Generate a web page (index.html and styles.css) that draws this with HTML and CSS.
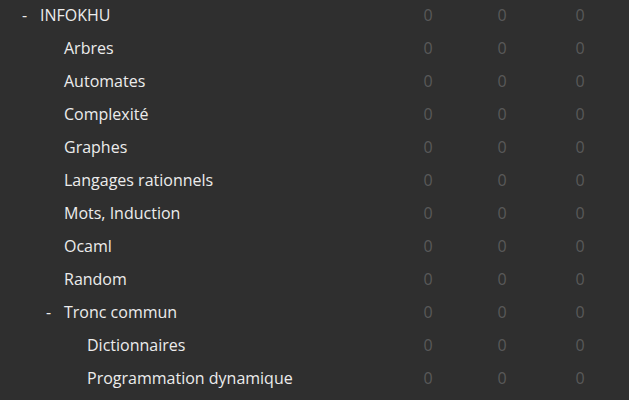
FILE: index.html
```html
<!DOCTYPE html>
<html>
<head>
<meta charset="utf-8">
<link rel="stylesheet" href="styles.css">
</head>
<body>
<div class="decks">
  <div class="row"><div class="name lvl0"><span class="collapse">-</span><span class="deck">INFOKHU</span></div><div class="count">0</div><div class="count">0</div><div class="count">0</div></div>
  <div class="row"><div class="name lvl1"><span class="collapse"></span><span class="deck">Arbres</span></div><div class="count">0</div><div class="count">0</div><div class="count">0</div></div>
  <div class="row"><div class="name lvl1"><span class="collapse"></span><span class="deck">Automates</span></div><div class="count">0</div><div class="count">0</div><div class="count">0</div></div>
  <div class="row"><div class="name lvl1"><span class="collapse"></span><span class="deck">Complexité</span></div><div class="count">0</div><div class="count">0</div><div class="count">0</div></div>
  <div class="row"><div class="name lvl1"><span class="collapse"></span><span class="deck">Graphes</span></div><div class="count">0</div><div class="count">0</div><div class="count">0</div></div>
  <div class="row"><div class="name lvl1"><span class="collapse"></span><span class="deck">Langages rationnels</span></div><div class="count">0</div><div class="count">0</div><div class="count">0</div></div>
  <div class="row"><div class="name lvl1"><span class="collapse"></span><span class="deck">Mots, Induction</span></div><div class="count">0</div><div class="count">0</div><div class="count">0</div></div>
  <div class="row"><div class="name lvl1"><span class="collapse"></span><span class="deck">Ocaml</span></div><div class="count">0</div><div class="count">0</div><div class="count">0</div></div>
  <div class="row"><div class="name lvl1"><span class="collapse"></span><span class="deck">Random</span></div><div class="count">0</div><div class="count">0</div><div class="count">0</div></div>
  <div class="row"><div class="name lvl1"><span class="collapse">-</span><span class="deck">Tronc commun</span></div><div class="count">0</div><div class="count">0</div><div class="count">0</div></div>
  <div class="row"><div class="name lvl2"><span class="collapse"></span><span class="deck">Dictionnaires</span></div><div class="count">0</div><div class="count">0</div><div class="count">0</div></div>
  <div class="row"><div class="name lvl2"><span class="collapse"></span><span class="deck">Programmation dynamique</span></div><div class="count">0</div><div class="count">0</div><div class="count">0</div></div>
</div>
</body>
</html>
```
FILE: styles.css
```css
html, body {
  margin: 0;
  padding: 0;
  background: #2f2f2f;
  height: 100%;
  overflow: hidden;
}
body {
  font-family: "Open Sans", "Noto Sans", sans-serif;
  font-size: 16px;
  color: #ececec;
}
.decks {
  margin-top: -2px;
  padding-right: 8px;
}
.row {
  display: grid;
  grid-template-columns: 1fr 74px 74px 82px;
  height: 33px;
  align-items: center;
}
.name {
  display: flex;
  align-items: center;
  white-space: nowrap;
}
.lvl0 { padding-left: 22px; }
.lvl1 { padding-left: 46px; }
.lvl2 { padding-left: 69px; }
.collapse {
  width: 18px;
  flex: none;
}
.count {
  text-align: center;
  color: #595959;
}
```
